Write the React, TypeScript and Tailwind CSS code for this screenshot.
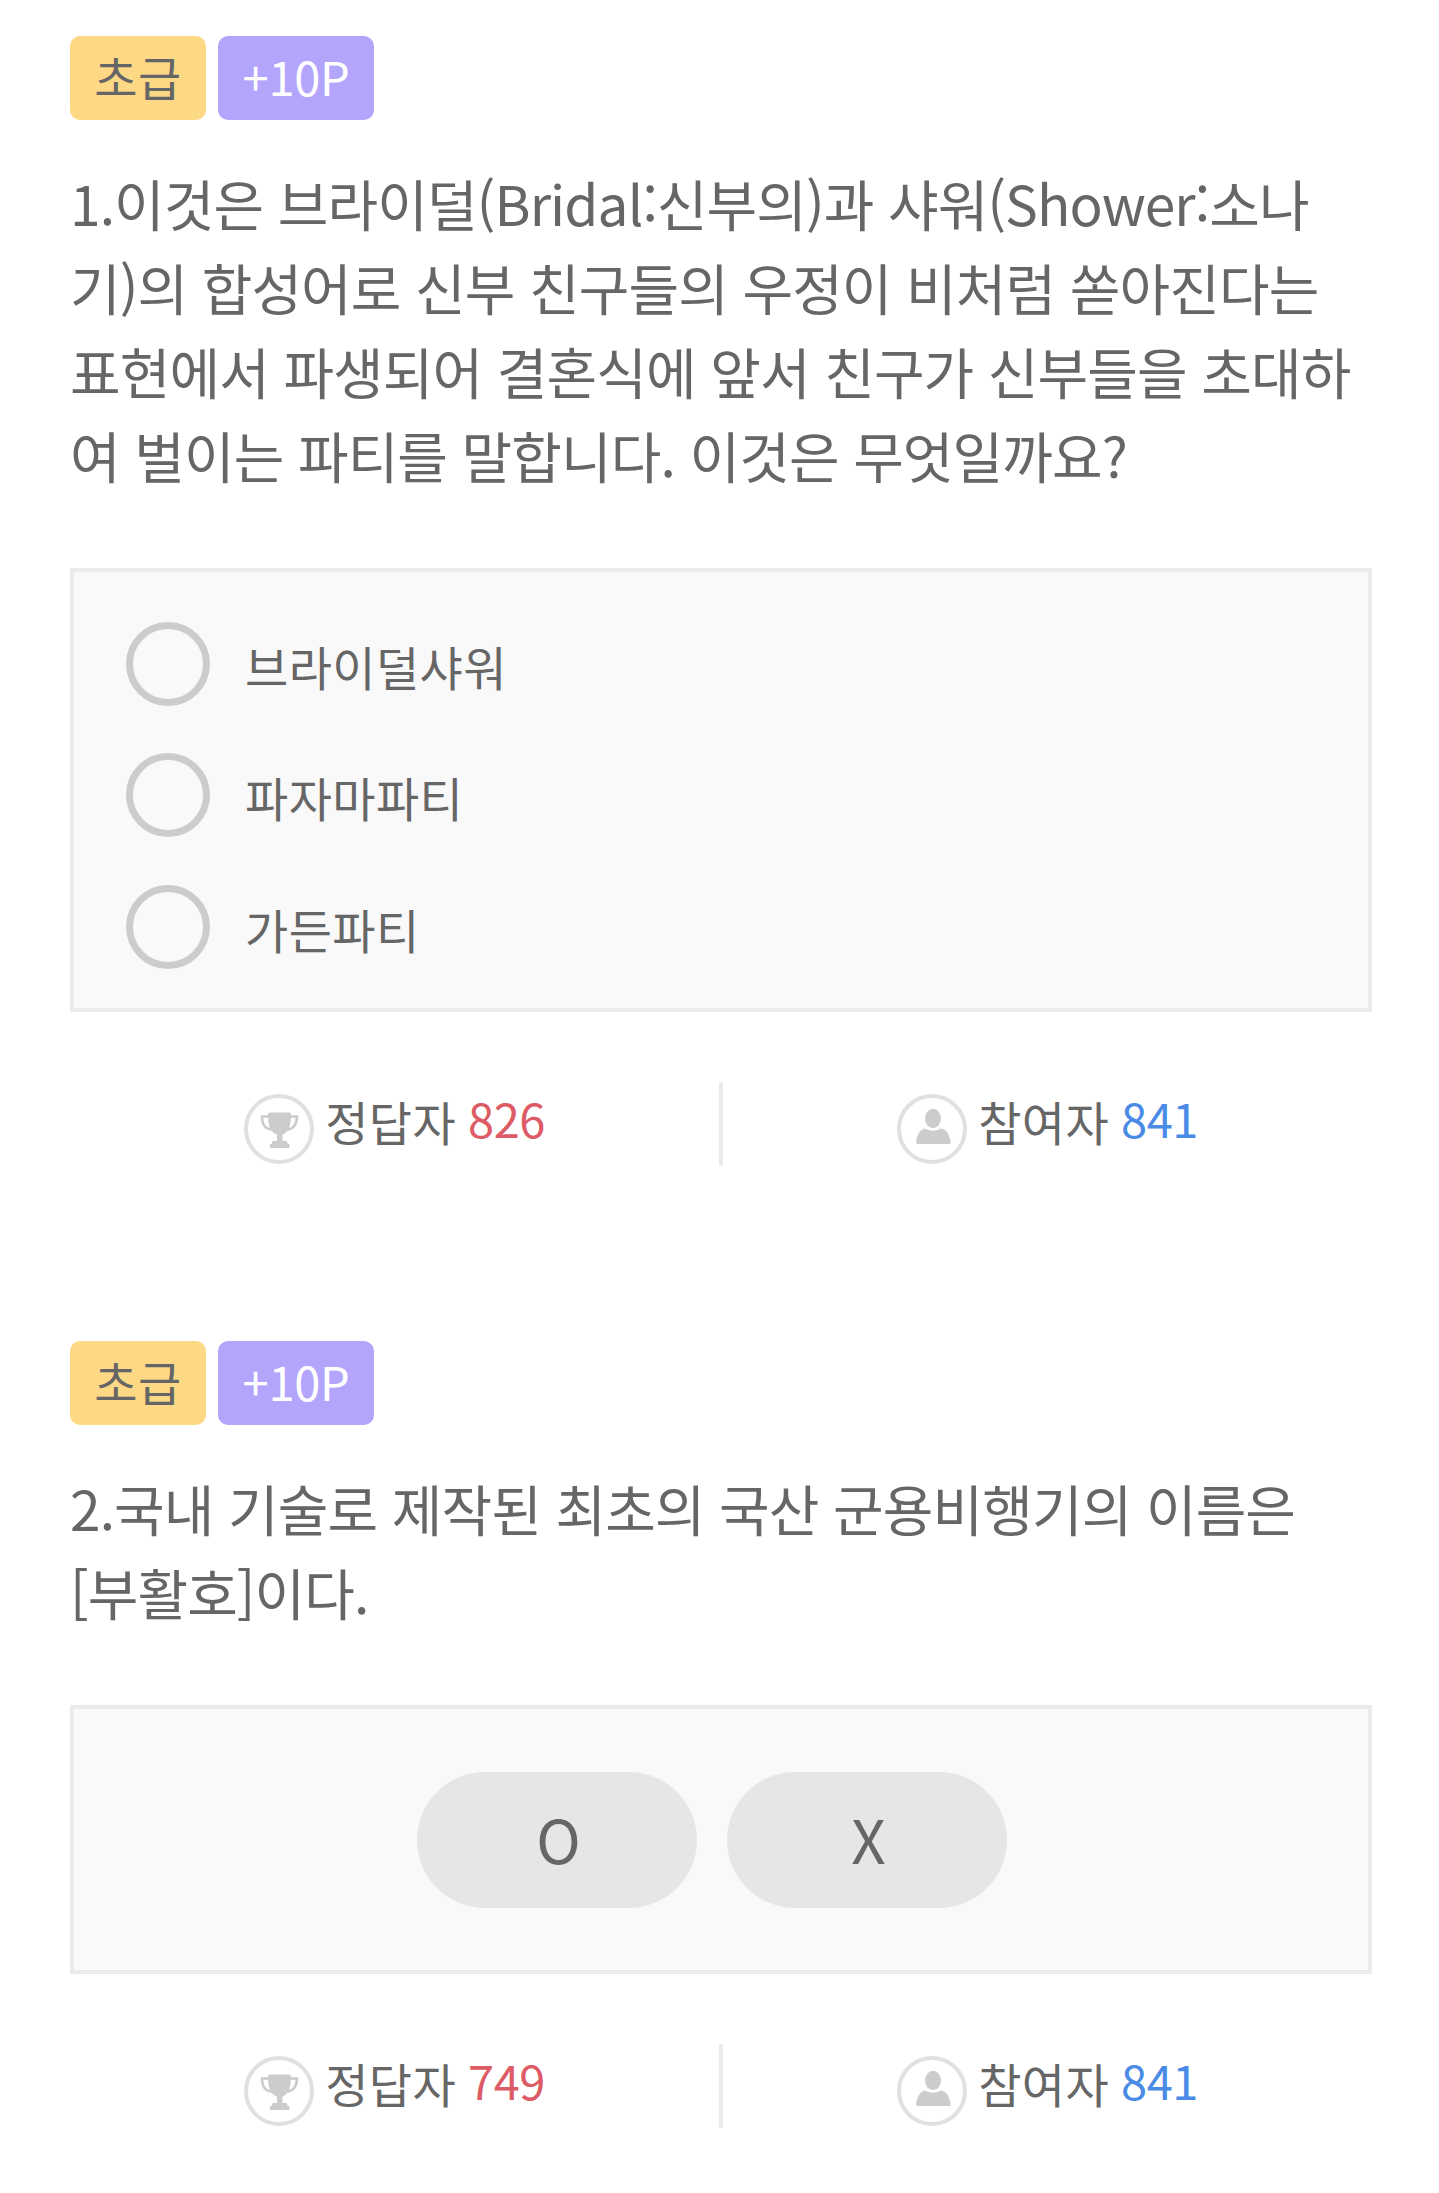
import type { ReactNode } from 'react';

interface Question {
  no: number;
  level: string;
  point: number;
  text: string;
  options?: string[];
  correct: number;
  joined: number;
}

const QUESTIONS: Question[] = [
  {
    no: 1,
    level: '초급',
    point: 10,
    text: '이것은 브라이덜(Bridal:신부의)과 샤워(Shower:소나기)의 합성어로 신부 친구들의 우정이 비처럼 쏟아진다는 표현에서 파생되어 결혼식에 앞서 친구가 신부들을 초대하여 벌이는 파티를 말합니다. 이것은 무엇일까요?',
    options: ['브라이덜샤워', '파자마파티', '가든파티'],
    correct: 826,
    joined: 841,
  },
  {
    no: 2,
    level: '초급',
    point: 10,
    text: '국내 기술로 제작된 최초의 국산 군용비행기의 이름은 [부활호]이다.',
    correct: 749,
    joined: 841,
  },
];

function TrophyIcon() {
  return (
    <svg width="70" height="70" viewBox="0 0 70 70" fill="none" className="shrink-0">
      <circle cx="35" cy="35" r="33" stroke="#e0e0e0" strokeWidth="4" />
      <path d="M25 22.500H18C18 30 21 36 29 35.500M45 22.500h8C53 30 49 36 42 35.500" stroke="#ccc" strokeWidth="2.6" />
      <path
        d="M24 20.500Q24 18.500 26 18.500H45Q47 18.500 47 20.500C47 32 44.500 38.500 38.500 40.500V47H42Q43.500 47 43.500 49V50H44.500Q45.500 50 45.500 51V54H26V51Q26 50 27 50H28V49Q28 47 29.500 47H33V40.500C26.500 38.500 24 32 24 20.500Z"
        fill="#ccc"
      />
    </svg>
  );
}

function PersonIcon() {
  return (
    <svg width="70" height="70" viewBox="0 0 70 70" fill="none" className="shrink-0">
      <circle cx="35" cy="35" r="33" stroke="#e0e0e0" strokeWidth="4" />
      <ellipse cx="36" cy="24.500" rx="8" ry="9.700" fill="#ccc" />
      <path d="M28 34.500Q36 39 44 34.500C50 35.500 52.500 41 53.700 48Q54 50 52 50H21Q18.700 50 19 48C20 41 23 35.500 28 34.500Z" fill="#ccc" />
    </svg>
  );
}

function Stat({ icon, label, children }: { icon: ReactNode; label: string; children: ReactNode }) {
  return (
    <div className="flex flex-1 justify-center gap-[11px] pt-3">
      {icon}
      <p className="flex gap-3 text-[47px] whitespace-nowrap">
        <span className="leading-[54px] tracking-[0.4px]">{label}</span>
        {children}
      </p>
    </div>
  );
}

function QuestionBlock({ q }: { q: Question }) {
  return (
    <section>
      <div className="flex gap-3 text-[47px] leading-[80px]">
        <span className="h-[84px] w-[136px] rounded-[10px] bg-[#fdd985] text-center tracking-[0.4px]">{q.level}</span>
        <span className="h-[84px] w-[156px] rounded-[10px] bg-[#b3a5fc] text-center tracking-[-0.3px] text-white">{`+${q.point}P`}</span>
      </div>

      <p className="mt-10 text-[55px] leading-[84px] tracking-[-0.88px] break-all">{`${q.no}.${q.text}`}</p>

      {q.options ? (
        <ul className="mt-[72px] flex h-[444px] flex-col gap-[47.5px] border-4 border-[#ebebeb] bg-[#f9f9f9] pt-[49.7px] pl-[52px]">
          {q.options.map((option) => (
            <li key={option} className="flex h-[84px] gap-[35px] text-[47px] leading-[87px] tracking-[0.4px]">
              <span className="size-[84px] rounded-full border-[7px] border-[#ccc]" />
              {option}
            </li>
          ))}
        </ul>
      ) : (
        <div className="mt-[72px] flex h-[269px] gap-[30px] border-4 border-[#ebebeb] bg-[#f9f9f9] pt-[63px] pl-[343px] text-[60px] leading-[131px]">
          <div className="h-[136px] w-[280px] rounded-full bg-[#e6e6e6] pl-[3px] text-center">O</div>
          <div className="h-[136px] w-[280px] rounded-full bg-[#e6e6e6] pl-[3px] text-center">X</div>
        </div>
      )}

      {/* answer / participant counts */}
      <div className="mt-[70px] flex h-[84px]">
        <Stat icon={<TrophyIcon />} label="정답자">
          <span className="leading-[47px] tracking-[-0.5px] text-[#dd5b65]">{q.correct}</span>
        </Stat>
        <div className="w-1 bg-[#ebebeb]" />
        <Stat icon={<PersonIcon />} label="참여자">
          <span className="leading-[47px] tracking-[-0.5px] text-[#4a8be6]">{q.joined}</span>
        </Stat>
      </div>
    </section>
  );
}

export default function App() {
  return (
    <main
      lang="ko"
      className="flex h-[2193px] w-[1439px] flex-col gap-[175px] overflow-hidden bg-white pt-9 pr-[67px] pl-[70px] font-['Noto_Sans_CJK_KR',sans-serif] text-[#666]"
    >
      {QUESTIONS.map((q) => (
        <QuestionBlock key={q.no} q={q} />
      ))}
    </main>
  );
}
